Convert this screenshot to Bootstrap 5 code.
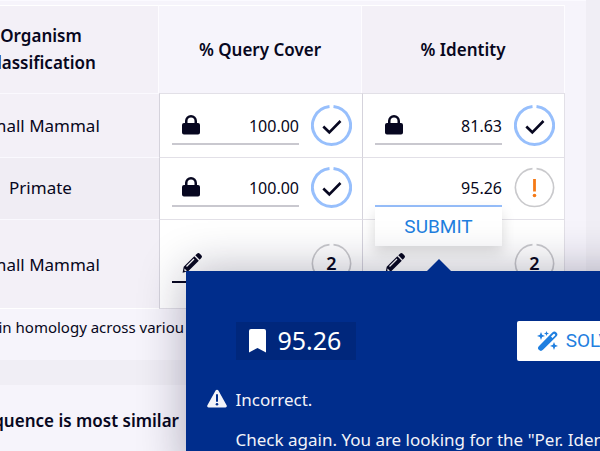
<!DOCTYPE html>
<html lang="en">
<head>
<meta charset="utf-8">
<meta name="viewport" content="width=device-width, initial-scale=1">
<title>Sequence homology</title>
<link href="https://cdn.jsdelivr.net/npm/bootstrap@5.3.0/dist/css/bootstrap.min.css" rel="stylesheet">
<style>
:root { --ink: #070720; --royal: #002d8c; --azure: #1f7fe0; --sky: #97bffc; }
body { font-family: "Noto Sans", sans-serif; font-size: 17px; line-height: 27px; color: var(--ink); background: #f0eef5; overflow: hidden; min-height: 100vh; }
.sheet { background: #f6f4fb; margin-right: 14px; padding-right: 21px; }
.sheet-top { border-top: 1px solid #fbfaff; padding-top: 4px; padding-bottom: 21px; }
.sheet-next { margin-top: 25px; padding-top: 22px; padding-bottom: 22px; }
.bleed { margin-left: -78px; }
.results { width: 100%; table-layout: fixed; border-collapse: separate; border-spacing: 0; text-align: center; }
.results .first-col { width: 237px; }
.results th { font-weight: 600; padding: 16px 24px 17px; border-top: 1px solid #fff; border-right: 1px solid #fdfcff; background: #f6f4fb; }
.results th.tinted { background: #f3f0f7; }
.results thead th.first-col { padding-left: 50px; padding-right: 48px; }
.results tbody th { font-weight: 400; background: #f3f0f7; border-top: 1px solid #faf9fe; border-right: 0; padding: 0; }
.results tbody tr:nth-child(2) th { background: #f0edf4; padding-bottom: 2px; }
.results tbody tr:last-child th { border-bottom: 1px solid #fff; }
.results td { background: #fff; padding: 11px 10px 11px 12px; border-top: 1px solid #e2e0e7; border-left: 1px solid #d5d3dc; }
.results td:last-child { border-right: 1px solid #e2e0e7; padding-right: 9px; }
.results tbody tr:nth-child(2) td { padding-top: 9px; padding-bottom: 11px; }
.results tbody tr:last-child td { padding-top: 23px; padding-bottom: 24px; border-bottom: 1px solid #e2e0e7; }
.entry { gap: 12px; }
.field { height: 38px; }
.field input { width: 100%; height: 38px; padding: 3px 0 0; border: 0; border-bottom: 2px solid #c9c8cf; border-radius: 0; background: transparent; text-align: right; font-size: 16px; color: var(--ink); outline: 0; }
.field input.editable { border-color: var(--ink); }
.field input.active { border-color: var(--sky); }
.glyph { position: absolute; left: 10px; top: 8px; }
.ring { width: 41px; height: 41px; flex: none; }
.ring text { font: 600 18px "Noto Sans", sans-serif; fill: var(--ink); }
.submit-btn { position: absolute; top: 38px; left: 0; right: 0; z-index: 2; height: 39px; border: 0; background: #fff; color: var(--azure); font: 400 19px/39px Roboto, sans-serif; padding: 0; box-shadow: 0 6px 14px rgba(0,0,0,.14); }
.hint { position: absolute; z-index: 3; top: 102px; left: 50%; width: 506px; margin-left: -253px; padding: 50px 50px 24px; background: var(--royal); color: #f3f3f8; text-align: left; box-shadow: 0 0 44px rgba(20,15,50,.32); }
.hint::before { content: ""; position: absolute; left: 50%; top: -12px; margin-left: -12px; border: 12px solid transparent; border-top: 0; border-bottom-color: var(--royal); }
.answer { background: #00277c; width: 120px; height: 38px; padding-left: 13px; gap: 12px; font-size: 25px; color: #fff; }
.solve-btn { height: 40px; padding: 0 20px; gap: 8px; border: 0; border-radius: 2px; background: #fff; color: var(--azure); font: 400 19px/40px Roboto, sans-serif; }
.verdict { margin-top: 25px; margin-left: -30px; gap: 8px; }
.advice { margin: 13px 0 0; white-space: nowrap; }
.caption { font-size: 15px; line-height: 24px; margin: 6px 0 0; white-space: nowrap; }
.question { font-size: 17px; font-weight: 600; line-height: 27px; margin: 0 5px 0 0; white-space: nowrap; }
.tail { width: 184px; }
</style>
<script src="https://cdn.jsdelivr.net/npm/bootstrap@5.3.0/dist/js/bootstrap.bundle.min.js"></script>
</head>
<body>
<svg class="d-none" aria-hidden="true">
  <symbol id="lock" viewBox="0 0 18 20"><path d="M2 8h1V6a6 6 0 0 1 12 0v2h1a2 2 0 0 1 2 2v7.500a2 2 0 0 1-2 2H2a2 2 0 0 1-2-2V10a2 2 0 0 1 2-2zm3.500 0h7V6a3.500 3.500 0 0 0-7 0z" fill="#070720"/></symbol>
  <symbol id="pencil" viewBox="0 0 20 20"><path d="M13.300 2.200 15 .7a2 2 0 0 1 2.800 0l1.500 1.500a2 2 0 0 1 0 2.800l-1.600 1.700z M12.300 3.200 16.800 7.700 6.200 18.300.6 19.800 1.700 13.800z" fill="#070720"/><path d="M4.500 13.500 12 6" stroke="#fff" stroke-width="1.300"/><path d="m2.600 15.500 2.200 2.300-1.700.4-.9-.9z" fill="#fff"/></symbol>
  <symbol id="ok" viewBox="0 0 41 41"><path d="M22.500 1.600A19 19 0 1 1 18.500 1.600" fill="none" stroke="#97bffc" stroke-width="3"/><path d="m12.300 21.500 6 5.800L29.500 16" fill="none" stroke="#070720" stroke-width="2.600"/></symbol>
  <symbol id="idle" viewBox="0 0 41 41"><path d="M22.500 1.600A19 19 0 1 1 18.500 1.600" fill="none" stroke="#c9c9cc" stroke-width="1.600"/></symbol>
</svg>

<main>
  <section class="sheet sheet-top">
    <div class="bleed">
      <table class="results">
        <thead>
          <tr>
            <th class="first-col tinted" scope="col">Organism Classification</th>
            <th scope="col">% Query Cover</th>
            <th class="tinted" scope="col">% Identity</th>
          </tr>
        </thead>
        <tbody>
          <tr>
            <th scope="row">Small Mammal</th>
            <td><div class="entry d-flex align-items-center">
              <div class="field position-relative flex-grow-1"><input type="text" value="100.00" readonly aria-label="Query cover, row 1"><svg class="glyph" width="18" height="20"><use href="#lock"/></svg></div>
              <svg class="ring"><use href="#ok"/></svg></div></td>
            <td><div class="entry d-flex align-items-center">
              <div class="field position-relative flex-grow-1"><input type="text" value="81.63" readonly aria-label="Identity, row 1"><svg class="glyph" width="18" height="20"><use href="#lock"/></svg></div>
              <svg class="ring"><use href="#ok"/></svg></div></td>
          </tr>
          <tr>
            <th scope="row">Primate</th>
            <td><div class="entry d-flex align-items-center">
              <div class="field position-relative flex-grow-1"><input type="text" value="100.00" readonly aria-label="Query cover, row 2"><svg class="glyph" width="18" height="20"><use href="#lock"/></svg></div>
              <svg class="ring"><use href="#ok"/></svg></div></td>
            <td><div class="entry d-flex align-items-center">
              <div class="field position-relative flex-grow-1"><input class="active" type="text" value="95.26" aria-label="Identity, row 2">
                <button class="submit-btn" type="button">SUBMIT</button>
                <div class="hint" role="status">
                  <div class="d-flex align-items-center justify-content-between">
                    <div class="answer d-flex align-items-center">
                      <svg width="17" height="24" viewBox="0 0 17 24"><path d="M2 0h13a2 2 0 0 1 2 2v21.500l-8.500-4.500L0 23.500V2a2 2 0 0 1 2-2z" fill="#fff"/></svg>
                      <span>95.26</span>
                    </div>
                    <button class="solve-btn d-flex align-items-center" type="button">
                      <svg width="21" height="20" viewBox="0 0 21 20" fill="#1f7fe0"><path d="M1.800 15.200 15.300 1.400a2.900 2.900 0 0 1 4.100 0 2.900 2.900 0 0 1 0 4.100L6 18.800a2.900 2.900 0 0 1-4.200 0 2.600 2.600 0 0 1 0-3.600zM14 5.600l1.500 1.500 2.500-2.600a1.100 1.100 0 0 0-1.500-1.500z" fill-rule="evenodd"/><path d="m4 1 1.100 2.800L8 5 5.100 6.100 4 9 2.900 6.100 0 5l2.900-1.200zM9.500 0l.7 1.800L12 2.500l-1.800.7-.7 1.800-.7-1.800L7 2.500l1.800-.7zM17 11l1.100 2.800L21 15l-2.900 1.100L17 19l-1.100-2.900L13 15l2.900-1.200z"/></svg>
                      <span>SOLVE</span>
                    </button>
                  </div>
                  <div class="verdict d-flex align-items-center">
                    <svg width="22" height="20" viewBox="0 0 22 20"><path d="M9.600 1.600a1.600 1.600 0 0 1 2.800 0l8.200 14.600a1.500 1.500 0 0 1-1.300 2.300H2.700a1.500 1.500 0 0 1-1.300-2.300z" fill="#f3f3f8"/><path d="M11 6v6" stroke="#002d8c" stroke-width="2" stroke-linecap="round"/><circle cx="11" cy="15.300" r="1.300" fill="#002d8c"/></svg>
                    <span>Incorrect.</span>
                  </div>
                  <p class="advice">Check again. You are looking for the "Per. Ident"</p>
                </div>
              </div>
              <svg class="ring" viewBox="0 0 41 41"><use href="#idle"/><path d="M20.500 12v12.500" stroke="#f57a16" stroke-width="2.800"/><circle cx="20.500" cy="28.500" r="1.800" fill="#f57a16"/></svg></div></td>
          </tr>
          <tr>
            <th scope="row">Small Mammal</th>
            <td><div class="entry d-flex align-items-center">
              <div class="field position-relative flex-grow-1"><input class="editable" type="text" aria-label="Query cover, row 3"><svg class="glyph" width="20" height="20"><use href="#pencil"/></svg></div>
              <svg class="ring" viewBox="0 0 41 41"><use href="#idle"/><text x="20.500" y="27" text-anchor="middle">2</text></svg></div></td>
            <td><div class="entry d-flex align-items-center">
              <div class="field position-relative flex-grow-1"><input class="editable" type="text" aria-label="Identity, row 3"><svg class="glyph" width="20" height="20"><use href="#pencil"/></svg></div>
              <svg class="ring" viewBox="0 0 41 41"><use href="#idle"/><text x="20.500" y="27" text-anchor="middle">2</text></svg></div></td>
          </tr>
        </tbody>
      </table>
    </div>
    <div class="tail d-flex justify-content-end"><p class="caption">protein homology across variou</p></div>
  </section>
  <section class="sheet sheet-next">
    <div class="tail d-flex justify-content-end"><p class="question">sequence is most similar</p></div>
  </section>
</main>
</body>
</html>
